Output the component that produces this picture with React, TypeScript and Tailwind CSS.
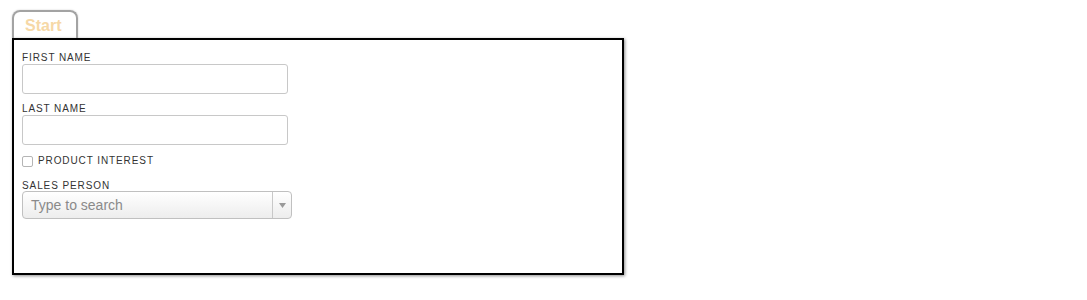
import React from "react";

export default function App() {
  return (
    <div className="w-[1087px] h-[300px] bg-white pt-[10px] pl-[12px]" style={{ fontFamily: '"Liberation Sans", Arial, sans-serif' }}>
      <div className="flex">
        <div className="w-[66px] h-[28px] border-2 border-b-0 border-[#a3a3a3] rounded-t-[8px] pl-[11px] pt-[4px] text-[16px] leading-[20px] font-bold text-[#f6d8a6] shadow-[0_0_2px_rgba(0,0,0,0.2)]">
          Start
        </div>
      </div>
      <div className="w-[612px] h-[237px] border-2 border-black bg-white shadow-[1px_1px_3px_rgba(0,0,0,0.45)] pl-[8px] pt-[11px] flex flex-col">
        <label className="pt-[1px] h-[12px] text-[10px] leading-[12px] tracking-[0.09em] text-[#333] uppercase">First Name</label>
        <input className="mt-[1px] w-[266px] h-[30px] border border-[#c8c8c8] rounded-[3px] outline-none" />
        <label className="pt-[1px] h-[12px] mt-[8px] text-[10px] leading-[12px] tracking-[0.09em] text-[#333] uppercase">Last Name</label>
        <input className="mt-[1px] w-[266px] h-[30px] border border-[#c8c8c8] rounded-[3px] outline-none" />
        <div className="mt-[10px] flex items-center h-[12px]">
          <span className="w-[11px] h-[11px] border border-[#b5b5b5] rounded-[2px] bg-white"></span>
          <span className="ml-[5px] text-[10px] leading-[12px] tracking-[0.09em] text-[#333] uppercase">Product Interest</span>
        </div>
        <label className="pt-[1px] h-[12px] mt-[12px] text-[10px] leading-[12px] tracking-[0.09em] text-[#333] uppercase">Sales Person</label>
        <div className="w-[270px] h-[28px] border border-[#c0c0c0] rounded-[4px] flex bg-gradient-to-b from-white to-[#ededed] overflow-hidden">
          <div className="flex-1 pl-[8px] text-[14px] leading-[26px] text-[#8a8a8a]">Type to search</div>
          <div className="w-[19px] border-l border-[#c8c8c8] flex items-center justify-center">
            <svg width="7" height="5" viewBox="0 0 7 5"><path d="M0 0 L7 0 L3.5 5 Z" fill="#9a9a9a" /></svg>
          </div>
        </div>
      </div>
    </div>
  );
}
